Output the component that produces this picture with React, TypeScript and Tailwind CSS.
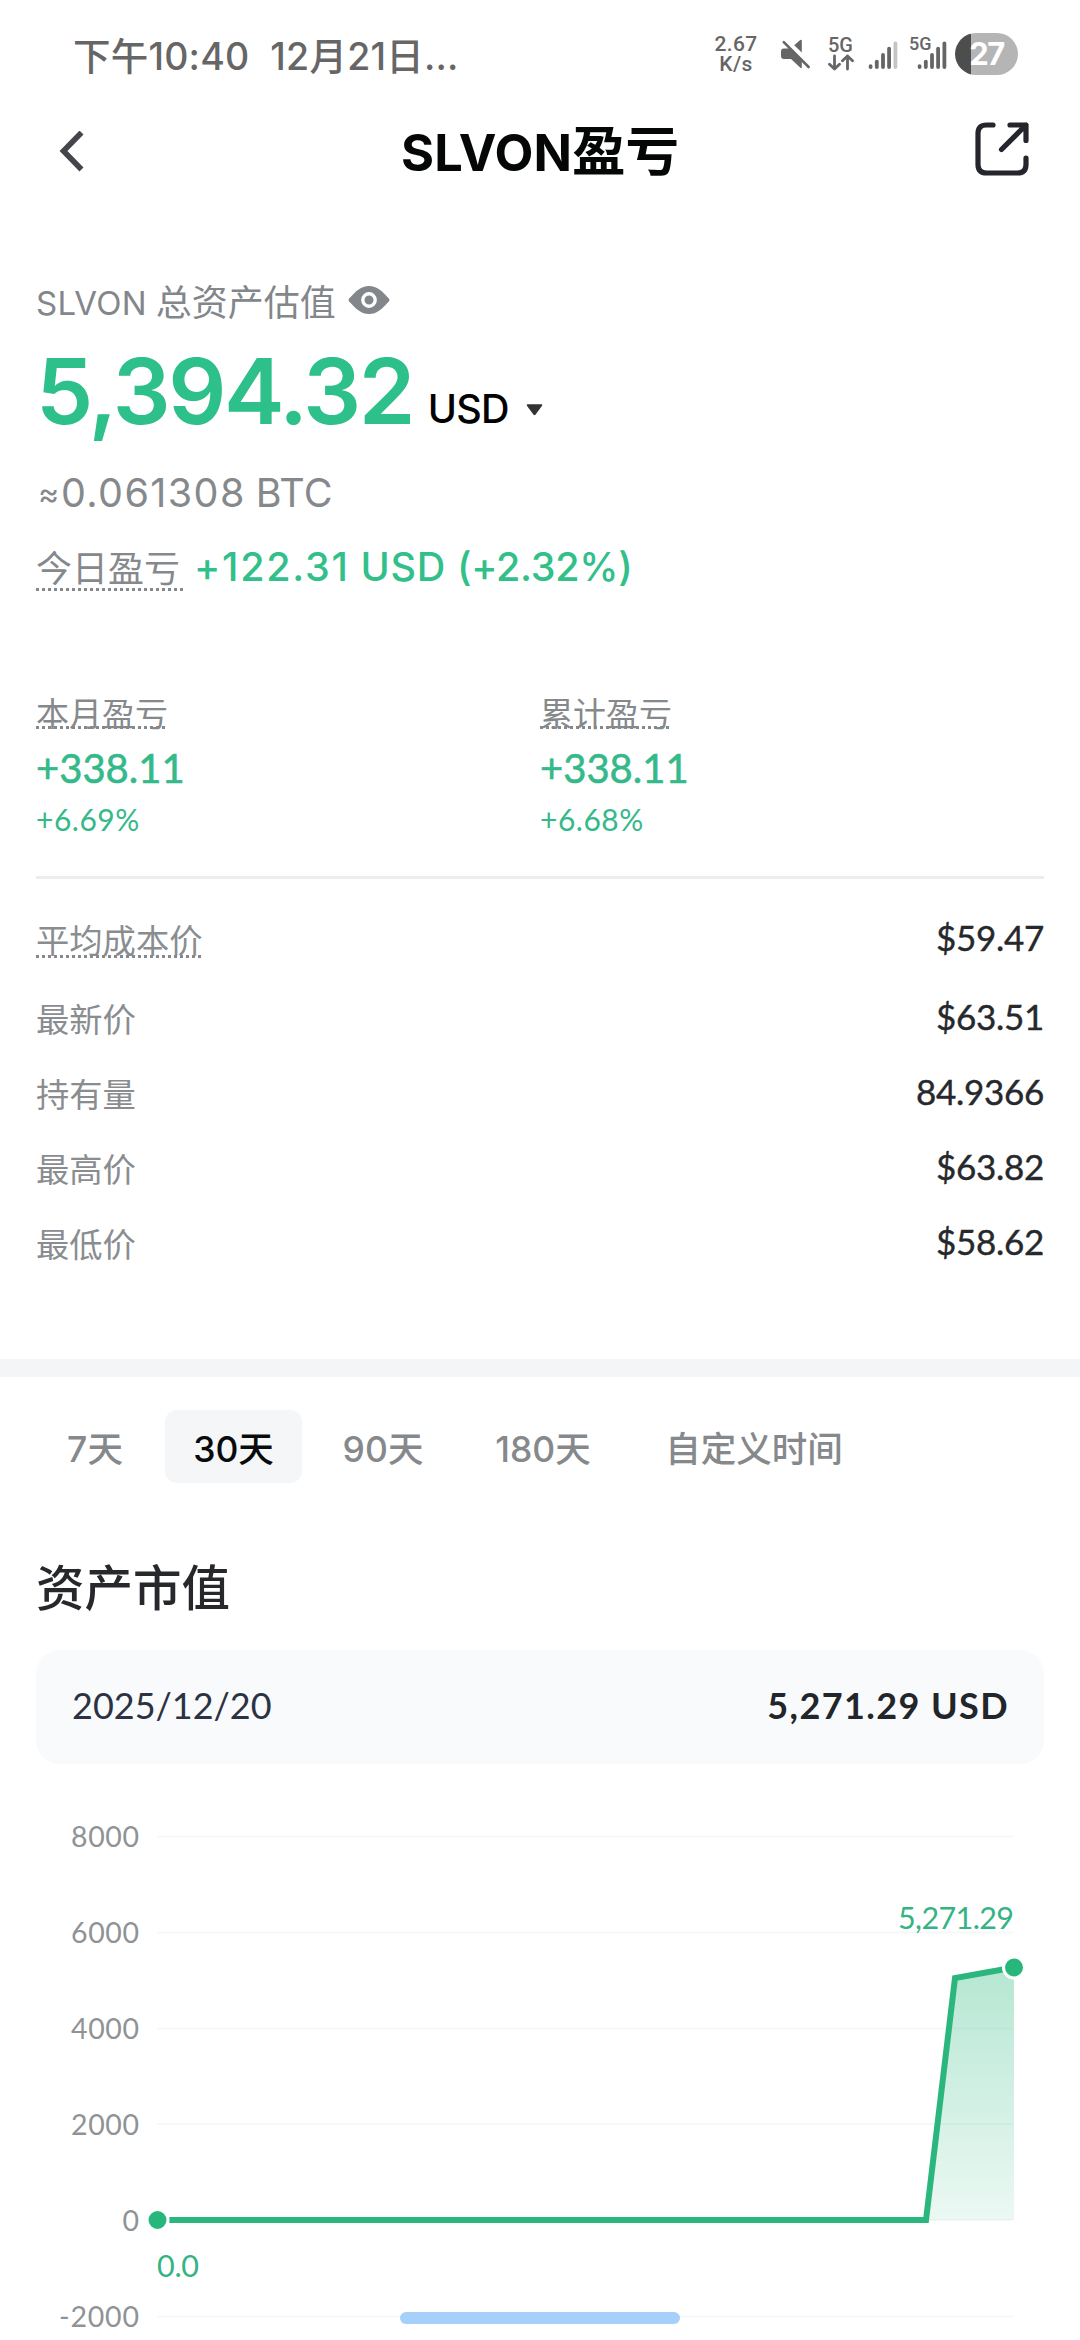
import { ReactNode } from 'react';

const summaryStats = [
  { label: '本月盈亏', value: '+338.11', percent: '+6.69%' },
  { label: '累计盈亏', value: '+338.11', percent: '+6.68%' },
];

const priceRows = [
  { label: '最新价', value: '$63.51' },
  { label: '持有量', value: '84.9366' },
  { label: '最高价', value: '$63.82' },
  { label: '最低价', value: '$58.62' },
];

const tabs = [
  { label: '7天', width: 'w-[108px]' },
  { label: '30天', width: 'w-[137px]', active: true },
  { label: '90天', width: 'w-[130px]' },
  { label: '180天', width: 'w-[158px]' },
  { label: '自定义时间', width: 'w-[232px]' },
];

const gridLines = [
  { label: '8000', y: 72.5, length: 68 },
  { label: '6000', y: 168.5, length: 68 },
  { label: '4000', y: 264.5, length: 68 },
  { label: '2000', y: 360, length: 68 },
  { label: '0', y: 456, length: 16 },
  { label: '-2000', y: 552.5, length: 80 },
];

interface DottedLabelProps {
  children: ReactNode;
  className?: string;
}

const DottedLabel = ({ children, className = '' }: DottedLabelProps) => (
  <span
    className={`bg-[repeating-linear-gradient(90deg,#86898c_0_3px,transparent_3px_6px)] bg-[length:100%_3px] bg-bottom bg-no-repeat ${className}`}
  >
    {children}
  </span>
);

const MuteIcon = () => (
  <svg width="30" height="30" viewBox="0 0 30 30" fill="#666666">
    <path d="M3 9.5H8.5L20.8 22V28.2Q20.8 29.8 19.4 28.8L10 20H3Q0 20 0 17V12.5Q0 9.5 3 9.5Z" />
    <path d="M13.2 6.2L19.2 1Q20.8 0 20.8 1.8V13.6Z" />
    <path d="M2.8 3.2L27.6 28" stroke="#666666" strokeWidth="2.6" strokeLinecap="round" />
  </svg>
);

const SignalIcon = ({ weak = false }: { weak?: boolean }) => (
  <svg width="30" height="30" viewBox="0 0 30 30" stroke="#666666" strokeWidth="3.8" strokeLinecap="round">
    <path d="M2.6 26.2V27" />
    <path d="M8.8 21.6V27" />
    <path d="M15 15V27" />
    <path d="M21.1 8.6V27" />
    <path d="M27.4 3.4V27" stroke={weak ? '#c4c4c4' : '#666666'} />
  </svg>
);

const StatusBar = () => (
  <div className="flex h-[112px] items-center justify-between pl-[73px] pr-[62px] font-medium text-[#666666]">
    <div className="flex gap-[21px] pt-px text-[37.5px] leading-none tracking-[0.2px]">
      <span>下午10:40</span>
      <span>12月21日...</span>
    </div>
    <div className="flex h-[42px] items-center pb-[5px]">
      <div className="flex w-[44px] flex-col items-center font-['Roboto'] text-[21px] leading-[20px] tracking-[0.4px]">
        <span>2.67</span>
        <span>K/s</span>
      </div>
      <div className="ml-[23px] flex">
        <MuteIcon />
      </div>
      <div className="ml-[16px] flex w-[27px] flex-col items-center font-['Roboto'] text-[20px] leading-[18px]">
        <span>5G</span>
        <svg width="26" height="17" viewBox="0 0 26 17" fill="none" stroke="#666666" strokeWidth="2.8" strokeLinecap="round" strokeLinejoin="round">
          <path d="M6.5 2V15M1.5 10.2L6.5 15L11.5 10.2" />
          <path d="M19.5 15V2M14.5 6.8L19.5 2L24.5 6.8" />
        </svg>
      </div>
      <div className="ml-[14px] flex pt-[3px]">
        <SignalIcon weak />
      </div>
      <div className="ml-[19px] flex pt-[3px]">
        <div className="relative">
          <SignalIcon />
          <span className="absolute -left-[8px] -top-[5px] font-['Roboto'] text-[18px] leading-[18px]">5G</span>
        </div>
      </div>
      <div className="ml-[8px] flex h-[42px] w-[63px] items-center justify-center rounded-full bg-[linear-gradient(90deg,#4d4d4d_0_16px,#b5b5b5_16px)] font-['Inter'] text-[31px] font-bold leading-none tracking-[-1.5px] text-white">
        27
      </div>
    </div>
  </div>
);

const Header = () => (
  <div className="flex h-[79px] items-center justify-between pl-[58px] pr-[50px]">
    <svg width="48" height="42" viewBox="0 0 48 42" fill="none" stroke="#45464c" strokeWidth="5.6">
      <path d="M23.5 1.5L5.500 20L23.5 38.500" />
    </svg>
    <h1 className="text-[50.5px] font-bold leading-none text-[#050606]">
      SLVON<span className="text-[53.500px]">盈亏</span>
    </h1>
    <svg className="mb-[6px]" width="56" height="56" viewBox="0 0 56 56" fill="none" stroke="#24252d" strokeWidth="5.2" strokeLinecap="round" strokeLinejoin="round">
      <path d="M19 4H12.500Q4 4 4 12.500V43.500Q4 52 12.500 52H43.500Q52 52 52 43.500V37" />
      <path d="M36 4H52V19.500M52 4L27.500 28.500" />
    </svg>
  </div>
);

const AssetOverview = () => (
  <section className="px-9 pt-[83px]">
    <div className="flex h-[58px] items-center text-[33px] leading-none text-[#83868a]">
      <span className="tracking-[0.3px]">SLVON</span>
      <span className="ml-[9px] text-[36px]">总资产估值</span>
      <svg className="relative -top-[3px] ml-[12px]" width="42" height="28" viewBox="0 0 42 28">
        <path d="M1 12.800C8 5 13 0 21 0S34 5 41 12.800Q42 14 41 15.200C34 23 29 28 21 28S8 23 1 15.200Q0 14 1 12.800Z" fill="#83868a" />
        <circle cx="21" cy="14" r="6.200" fill="#83868a" stroke="#fff" strokeWidth="3.400" />
      </svg>
    </div>
    <div className="mt-[11px] flex h-[96px] leading-[96px]">
      <span className="text-[91px] font-semibold tracking-[-2.5px] text-[#2dc08a]">5,394.32</span>
      <span className="relative top-[18px] ml-[15px] text-[39.500px] font-medium tracking-[-0.8px] text-black">USD</span>
      <svg className="ml-[17px] mt-[61px]" width="17" height="12" viewBox="0 0 18 12">
        <path d="M2 0H16Q18 0 17 1.500L10 11Q9 12 8 11L1 1.500Q0 0 2 0Z" fill="#333" />
      </svg>
    </div>
    <div className="mt-[26px] flex h-[58px] items-center text-[39.500px] leading-none text-[#86898c]">
      <span className="w-[25px] pl-[2px] text-[32px]">≈</span>
      <span className="tracking-[1.4px]">0.061308</span>
      <span className="ml-[10px]">BTC</span>
    </div>
    <div className="mt-[15px] flex h-[53px] leading-none">
      <DottedLabel className="flex items-center pr-[3px] pt-[9px] text-[36px] text-[#86898c]">今日盈亏</DottedLabel>
      <div className="ml-[11px] flex items-center gap-[11px] pt-[7px] text-[39.500px] font-medium text-[#31bf8a]">
        <span className="tracking-[1.7px]">+122.31</span>
        <span className="tracking-[0.7px]">USD</span>
        <span className="tracking-[-0.3px]">(+2.32%)</span>
      </div>
    </div>

    <div className="mt-[107px] grid grid-cols-2 font-['Lato','Noto_Sans_CJK_SC',sans-serif] leading-none text-[#35b98a]">
      {summaryStats.map((stat) => (
        <div key={stat.label} className="flex flex-col items-start">
          <DottedLabel className="flex h-[31px] items-center pt-[2px] font-['Inter','Noto_Sans_CJK_SC',sans-serif] text-[33px] text-[#86898c]">
            {stat.label}
          </DottedLabel>
          <span className="mt-[11px] flex h-[55px] items-center text-[40px] [-webkit-text-stroke:0.6px]">{stat.value}</span>
          <span className="mt-1 flex h-[40px] items-center text-[30px] tracking-[0.5px]">{stat.percent}</span>
        </div>
      ))}
    </div>
    <div className="mt-[37px] h-[3px] bg-[#ededed]" />
  </section>
);

interface DataRowProps {
  label: ReactNode;
  value: string;
}

const DataRow = ({ label, value }: DataRowProps) => (
  <div className="flex h-[75px] items-center justify-between leading-none">
    <span className="flex pt-[8px] text-[33.300px] text-[#8a8d90]">{label}</span>
    <span className="font-['Lato'] text-[35px] tracking-[-0.3px] text-[#26282c] [-webkit-text-stroke:0.4px]">{value}</span>
  </div>
);

const ValueChart = () => (
  <svg className="block font-['Lato',sans-serif]" width="1080" height="576" viewBox="0 0 1080 576">
    <defs>
      <linearGradient id="area" x1="0" y1="0" x2="0" y2="1">
        <stop offset="0" stopColor="#27b77d" stopOpacity="0.34" />
        <stop offset="1" stopColor="#27b77d" stopOpacity="0.09" />
      </linearGradient>
    </defs>
    {gridLines.map((line) => (
      <g key={line.label}>
        <text x="139" y={line.y + 10.5} textAnchor="end" fontSize="28.500" fill="#8f9396" textLength={line.length}>
          {line.label}
        </text>
        <path d={`M157 ${line.y}H1013`} stroke="#f6f7f7" strokeWidth="2" />
      </g>
    ))}
    <path d="M926 456L955 214L1014 203V456Z" fill="url(#area)" />
    <path d="M158 456H926L955 214L1014 203.500" fill="none" stroke="#2bb67d" strokeWidth="6" />
    <circle cx="157.500" cy="456" r="10.500" fill="#27b77d" stroke="#fff" strokeWidth="3" />
    <circle cx="1014" cy="203.500" r="10.500" fill="#27b77d" stroke="#fff" strokeWidth="3" />
    <text x="1014" y="165" textAnchor="end" fontSize="30.500" fill="#35b384" textLength="116">
      5,271.29
    </text>
    <text x="157" y="513" fontSize="30.500" fill="#35b384" textLength="42">
      0.0
    </text>
  </svg>
);

const App = () => {
  return (
    <div className="relative h-[2340px] w-[1080px] overflow-hidden bg-white font-['Inter','Noto_Sans_CJK_SC',sans-serif]">
      <StatusBar />
      <Header />
      <AssetOverview />

      <section className="px-9 pt-[21px]">
        <DataRow label={<DottedLabel className="flex h-[32px] items-center pt-px">平均成本价</DottedLabel>} value="$59.47" />
        <div className="mt-1">
          {priceRows.map((row) => (
            <DataRow key={row.label} label={row.label} value={row.value} />
          ))}
        </div>
      </section>

      <div className="mt-20 h-[18px] bg-[#f4f5f7]" />

      <div className="mt-[33px] flex h-[73px] gap-4 pl-[41px] text-[35.500px] font-medium leading-none">
        {tabs.map((tab) => (
          <button
            key={tab.label}
            className={`flex items-center justify-center rounded-xl pt-[6px] ${tab.width} ${
              tab.active ? 'bg-[#f4f6f7] text-[#0a0b0c]' : 'text-[#86898c]'
            }`}
          >
            {tab.label}
          </button>
        ))}
      </div>

      <h2 className="ml-9 mt-[76px] flex h-[60px] items-center text-[48.500px] font-medium leading-none text-[#26282c]">
        资产市值
      </h2>

      <div className="mx-9 mt-[31px] flex h-[114px] items-center justify-between rounded-3xl bg-[#f8fafc] pb-[4px] pl-9 pr-[35px] font-['Lato'] text-[36px] leading-none">
        <span className="text-[#2c3242]">2025/12/20</span>
        <span className="font-bold tracking-[1.4px] text-[#222529]">5,271.29 USD</span>
      </div>

      <ValueChart />

      <div className="absolute bottom-4 left-[400px] h-3 w-[280px] rounded-full bg-[#a6d0fa]" />
    </div>
  );
};

export default App;
